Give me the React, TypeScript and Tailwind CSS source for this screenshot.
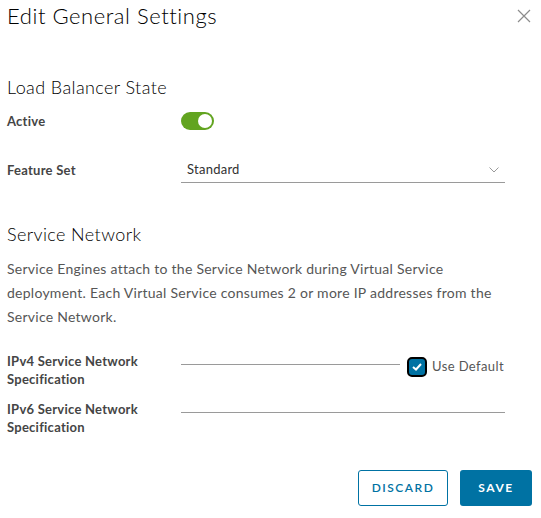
import React from "react";

function Toggle() {
  return (
    <div className="flex h-[18px] w-[33px] items-center justify-end rounded-full bg-[#62a420] pr-[2px]">
      <div className="h-[14px] w-[14px] rounded-full bg-white" />
    </div>
  );
}

function Label({ children }: { children: React.ReactNode }) {
  return (
    <div className="w-[174px] shrink-0 text-[13px] font-bold leading-[18px] tracking-[0.25px] text-[#454545]">
      {children}
    </div>
  );
}

export default function App() {
  return (
    <div className="h-[518px] w-[541px] bg-white font-['Lato',sans-serif] text-[#313131]">
      <div className="flex items-start justify-between pl-[7px] pr-[10px] pt-[3px]">
        <h1 className="text-[22px] font-light leading-[26px] tracking-[0.55px] text-[#000]">Edit General Settings</h1>
        <svg width="14" height="14" viewBox="0 0 14 14" className="mt-[6px] text-[#8c8c8c]">
          <path d="M1 1L13 13M13 1L1 13" stroke="currentColor" strokeWidth="1.2" />
        </svg>
      </div>

      <div className="px-[7px] pr-[36px]">
        <h2 className="mt-[47px] text-[18px] font-light leading-[22px] tracking-[0.4px] text-[#000]">
          Load Balancer State
        </h2>

        <div className="mt-[14px] flex items-center">
          <Label>Active</Label>
          <Toggle />
        </div>

        <div className="mt-[27px] flex items-center">
          <Label>Feature Set</Label>
          <div className="flex h-[26px] flex-1 items-center justify-between border-b border-[#9a9a9a] pl-[6px] pr-[6px]">
            <span className="text-[13px] tracking-[0.25px] text-[#313131]">Standard</span>
            <svg width="10" height="6" viewBox="0 0 10 6">
              <path d="M0.5 0.5L5 5L9.5 0.5" fill="none" stroke="#9a9a9a" strokeWidth="1" />
            </svg>
          </div>
        </div>

        <h2 className="mt-[40px] text-[18px] font-light leading-[22px] tracking-[0.4px] text-[#000]">
          Service Network
        </h2>
        <p className="mt-[12px] text-[14px] leading-[24px] tracking-[0.26px] text-[#565656]">
          Service Engines attach to the Service Network during Virtual Service deployment. Each Virtual Service
          consumes 2 or more IP addresses from the Service Network.
        </p>

        <div className="mt-[23px] flex items-start">
          <Label>
            IPv4 Service Network
            <br />
            Specification
          </Label>
          <div className="mt-[12px] h-px w-[219px] bg-[#9a9a9a]" />
          <div className="ml-[7px] mt-[5px] flex items-center">
            <div className="flex h-[20px] w-[20px] items-center justify-center rounded-[5px] border-2 border-[#000] bg-[#0072a3]">
              <svg width="10" height="8" viewBox="0 0 10 8">
                <path d="M1 4L4 6.5L9 1" fill="none" stroke="white" strokeWidth="2" />
              </svg>
            </div>
            <span className="ml-[5px] text-[13px] tracking-[0.4px] text-[#565656]">Use Default</span>
          </div>
        </div>

        <div className="mt-[12px] flex items-start">
          <Label>
            IPv6 Service Network
            <br />
            Specification
          </Label>
          <div className="mt-[12px] h-px flex-1 bg-[#9a9a9a]" />
        </div>
      </div>

      <div className="mt-[34px] flex justify-end gap-[12px] pr-[9px]">
        <button className="h-[36px] w-[90px] rounded-[3px] border border-[#0072a3] bg-white text-[12px] font-semibold tracking-[1.5px] text-[#0072a3]">
          DISCARD
        </button>
        <button className="h-[36px] w-[72px] rounded-[3px] bg-[#0072a3] text-[12px] font-bold tracking-[1.5px] text-white">
          SAVE
        </button>
      </div>
    </div>
  );
}
